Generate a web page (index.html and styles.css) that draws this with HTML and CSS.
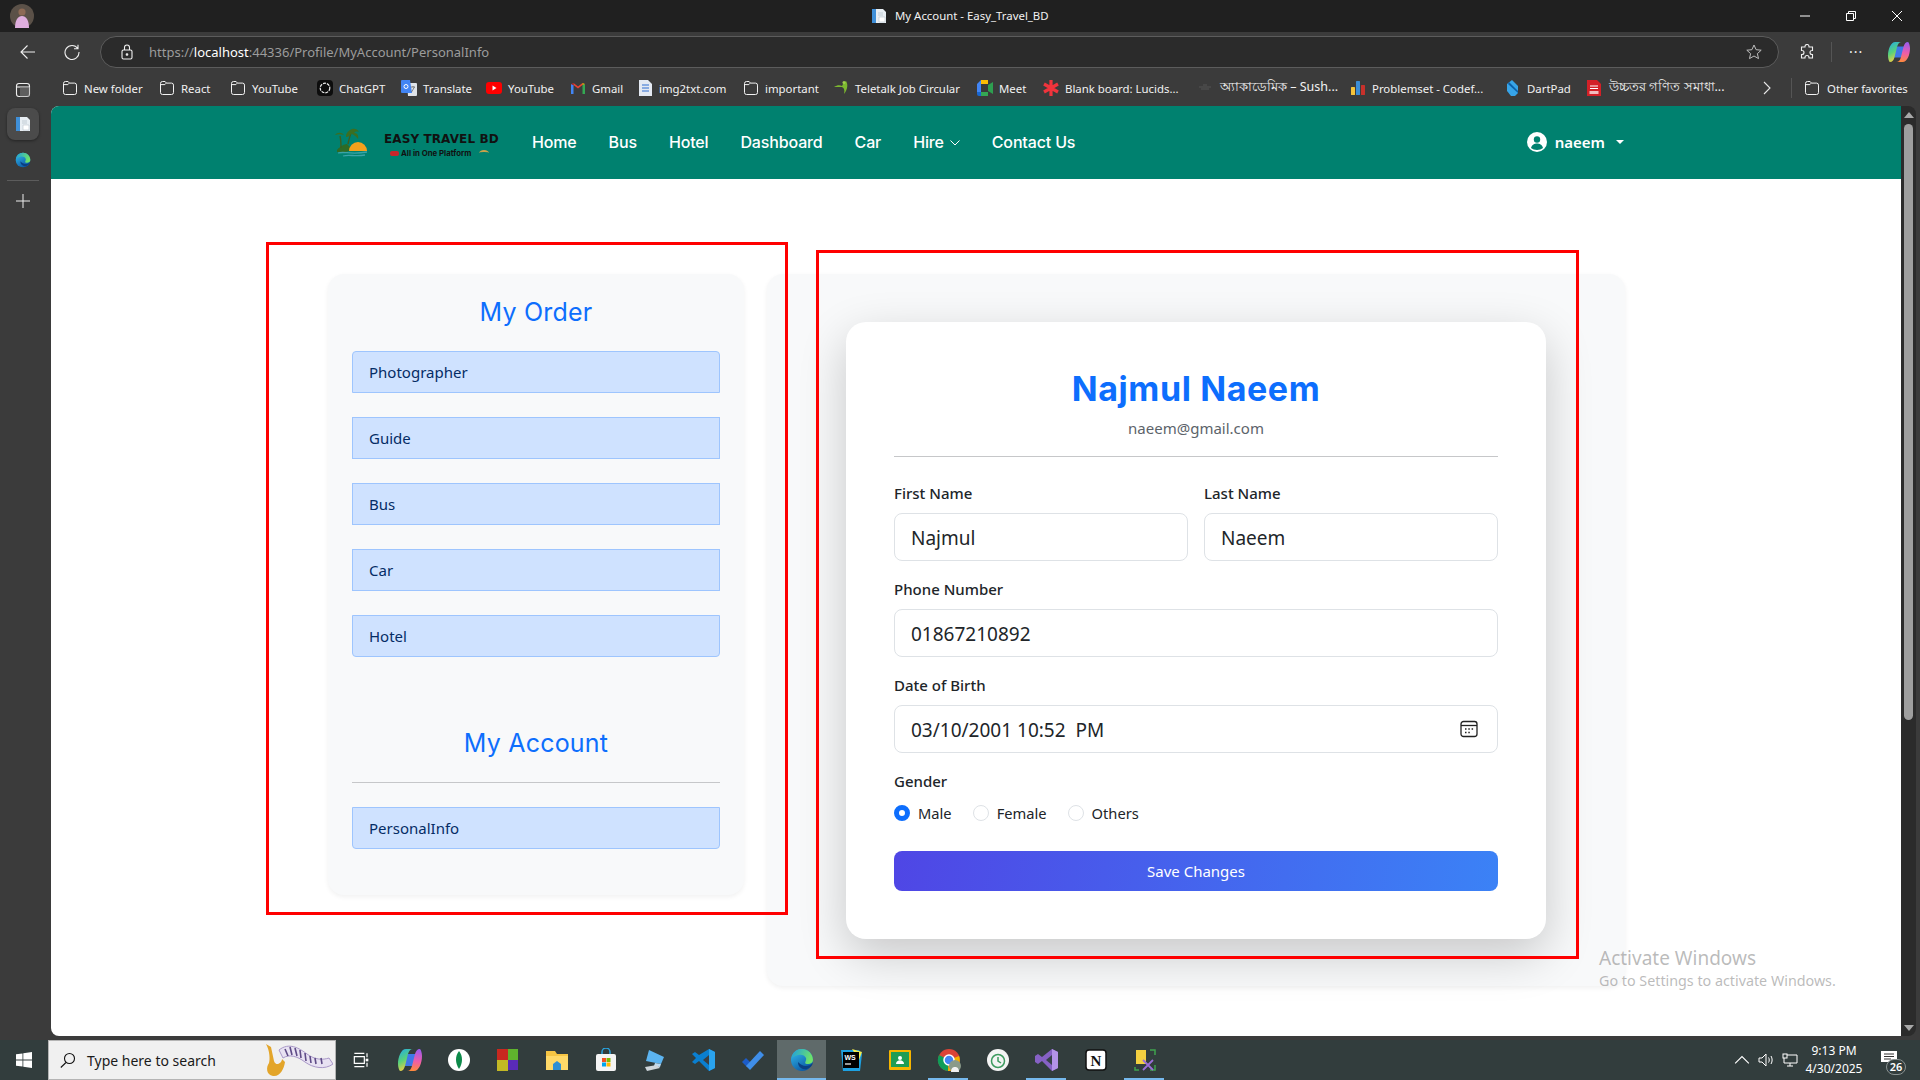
FILE: index.html
```html
<!DOCTYPE html>
<html lang="en">
<head>
<meta charset="utf-8">
<title>My Account - Easy_Travel_BD</title>
<link rel="stylesheet" href="styles.css">
</head>
<body>
<svg class="defs" width="0" height="0" aria-hidden="true">
  <symbol id="folder" viewBox="0 0 16 16"><path d="M1.5 3.5a2 2 0 0 1 2-2h2.6l1.4 1.6h5a2 2 0 0 1 2 2v7.4a2 2 0 0 1-2 2h-9a2 2 0 0 1-2-2z M1.5 4.6h4.4l1.4-1.5" fill="none" stroke="#f2f2f2" stroke-width="1"/></symbol>
  <symbol id="tabdoc" viewBox="0 0 16 16"><path d="M1 1h6v14H1z" fill="#3f8fd8"/><path d="M5 1h7l3 3v11H5z" fill="#e8eef3"/><path d="M8 9h6v5H8z" fill="#fff" stroke="#b9c3cc" stroke-width=".6"/><path d="M7 5h5M7 7h5" stroke="#b9c3cc" stroke-width=".8"/></symbol>
  <linearGradient id="edgeA" x1="0" y1="0" x2=".6" y2="1"><stop offset="0" stop-color="#35c1f1"/><stop offset="1" stop-color="#0c59a4"/></linearGradient>
  <linearGradient id="edgeB" x1="0" y1="0" x2="1" y2=".3"><stop offset="0" stop-color="#1b9de2"/><stop offset="1" stop-color="#6ee26a"/></linearGradient>
  <symbol id="edge" viewBox="0 0 24 24"><circle cx="12" cy="12" r="11" fill="url(#edgeA)"/><path d="M1.500 10C3 4 7 1 12 1c6 0 11 5 11 11 0 3-3 4.500-6 4-4-.5 0-3-1-6-1-3-5-4-8-3-3 1-5 2-6.500 3z" fill="url(#edgeB)"/><path d="M8 14c0 5 4 8 9 7 3-1 5-3 6-6-3 3-8 4-11 2-2-1-3-2-4-3z" fill="#0b3f82"/></symbol>
  <linearGradient id="copA" x1="0" y1="0" x2=".4" y2="1"><stop offset="0" stop-color="#1fa9ec"/><stop offset=".55" stop-color="#58d27a"/><stop offset="1" stop-color="#f5d042"/></linearGradient>
  <linearGradient id="copB" x1=".6" y1="0" x2=".5" y2="1"><stop offset="0" stop-color="#9a5bf0"/><stop offset=".55" stop-color="#ef5da8"/><stop offset="1" stop-color="#ff8a3c"/></linearGradient>
  <symbol id="copilot" viewBox="0 0 24 24"><path d="M9 6h10l-4 12H5z" fill="#3f78e8"/><path d="M8 1h7c-3 0-4 2-5 5L7 18c-1 3-2 5-5 5-1-1-2-4-2-7C0 9 3 1 8 1z" fill="url(#copA)"/><path d="M16 23H9c3 0 4-2 5-5l3-12c1-3 2-5 5-5 1 1 2 4 2 7 0 7-3 15-8 15z" fill="url(#copB)"/></symbol>
</svg>

<div class="window">
  <header class="titlebar">
    <svg class="avatar" viewBox="0 0 24 24"><circle cx="12" cy="12" r="12" fill="#5b5148"/><circle cx="12" cy="8" r="3.600" fill="#8d6a55"/><path d="M5 24c0-8 3-12 7-12s7 4 7 12z" fill="#dfaede"/></svg>
    <div class="tab-title">
      <svg class="ic16"><use href="#tabdoc"/></svg>
      <span>My Account - Easy_Travel_BD</span>
    </div>
    <div class="winctl">
      <svg viewBox="0 0 10 10"><path d="M0 5h10" stroke="#fff"/></svg>
      <svg viewBox="0 0 10 10" fill="none" stroke="#fff"><path d="M.5 2.5h7v7h-7z M2.5 2.5V.5h7v7h-2"/></svg>
      <svg viewBox="0 0 10 10"><path d="M0 0l10 10M10 0L0 10" stroke="#fff"/></svg>
    </div>
  </header>

  <div class="toolbar">
    <svg class="tool-ic" viewBox="0 0 16 16" fill="none" stroke="#f0f0f0" stroke-width="1.1"><path d="M15 8H1M7.5 1.5L1 8l6.500 6.500"/></svg>
    <svg class="tool-ic" viewBox="0 0 16 16" fill="none" stroke="#f0f0f0" stroke-width="1.1"><path d="M13.800 4.500A7 7 0 1 0 15 8M14 .8v4h-4"/></svg>
    <div class="addr">
      <svg class="lock" viewBox="0 0 12 16" fill="none" stroke="#f0f0f0" stroke-width="1.1"><rect x="1" y="6" width="10" height="9" rx="1.500"/><path d="M3.500 6V3.500a2.500 2.500 0 0 1 5 0V6"/><circle cx="6" cy="10.500" r=".8" fill="#f0f0f0"/></svg>
      <span class="url"><span class="url-dim">https://</span><span class="url-host">localhost</span><span class="url-dim">:44336/Profile/MyAccount/PersonalInfo</span></span>
      <svg class="star" viewBox="0 0 16 16" fill="none" stroke="#bdbdbd" stroke-width="1"><path d="M8 1l2.100 4.700 5.100.5-3.800 3.400 1.100 5L8 12l-4.500 2.600 1.100-5L.8 6.200l5.100-.5z"/></svg>
    </div>
    <div class="tool-right">
      <svg class="tool-ic" viewBox="0 0 16 16" fill="none" stroke="#f0f0f0" stroke-width="1.100"><path d="M6 2.500a2 2 0 0 1 4 0V3h3.500v3.500H13a2 2 0 0 0 0 4h.5V14H10v-.5a2 2 0 0 0-4 0v.5H2.500v-3.500H3a2 2 0 0 0 0-4h-.5V3H6z"/></svg>
      <span class="tool-sep"></span>
      <span class="dots">···</span>
      <svg class="copilot-ic"><use href="#copilot"/></svg>
    </div>
  </div>

  <nav class="bookmarks">
    <a class="bm"><svg class="ic16"><use href="#folder"/></svg><span>New folder</span></a>
    <a class="bm"><svg class="ic16"><use href="#folder"/></svg><span>React</span></a>
    <a class="bm"><svg class="ic16"><use href="#folder"/></svg><span>YouTube</span></a>
    <a class="bm"><svg class="ic16" viewBox="0 0 16 16"><rect width="16" height="16" rx="4" fill="#0d0d0d"/><circle cx="8" cy="8" r="4.800" fill="none" stroke="#eee" stroke-width="1.200" stroke-dasharray="3 1"/></svg><span>ChatGPT</span></a>
    <a class="bm"><svg class="ic16" viewBox="0 0 16 16"><path d="M6 3h9a1 1 0 0 1 1 1v11a1 1 0 0 1-1 1H7z" fill="#dfe3e8"/><path d="M1 0h8l2 13H1a1 1 0 0 1-1-1V1a1 1 0 0 1 1-1z" fill="#4285f4"/><path d="M10 7h4M12 6v1M10.500 12l3-5" stroke="#666" stroke-width=".8"/><circle cx="5" cy="6.500" r="2" fill="none" stroke="#fff"/></svg><span>Translate</span></a>
    <a class="bm"><svg class="ic16" viewBox="0 0 16 16"><rect y="2" width="16" height="12" rx="3" fill="#f00"/><path d="M6.500 5.500l4 2.500-4 2.500z" fill="#fff"/></svg><span>YouTube</span></a>
    <a class="bm"><svg class="ic16" viewBox="0 0 16 16"><path d="M1 14V4l2.500 1v9z" fill="#4285f4"/><path d="M15 14V4l-2.500 1v9z" fill="#34a853"/><path d="M3.500 5L8 8.500 12.500 5V3L8 6.500 3.500 3z" fill="#ea4335"/><path d="M1 4l2.500 1V3z" fill="#c5221f"/><path d="M15 4l-2.500 1V3z" fill="#fbbc04"/></svg><span>Gmail</span></a>
    <a class="bm"><svg class="ic16" viewBox="0 0 16 16"><path d="M2 0h9l4 4v12H2z" fill="#e4e9f2"/><path d="M5 5h7M5 8h7M5 11h7" stroke="#2f6fd0" stroke-width="1.200"/></svg><span>img2txt.com</span></a>
    <a class="bm"><svg class="ic16"><use href="#folder"/></svg><span>important</span></a>
    <a class="bm"><svg class="ic16" viewBox="0 0 16 16"><path d="M1 7c3-2 6-2 8-1 1-2 2-4 4-5 2 3 2 8-2 13 1-4 0-6-2-7-3 0-5 0-8 0z" fill="#7cb82f"/><circle cx="11" cy="2.500" r="1.500" fill="#9ed04a"/></svg><span>Teletalk Job Circular</span></a>
    <a class="bm"><svg class="ic16" viewBox="0 0 16 16"><path d="M0 4l4-4h7v4H4v8H0z" fill="#4285f4"/><path d="M4 0h7v4H4z" fill="#fbbc04"/><path d="M0 12h4v4H2a2 2 0 0 1-2-2z" fill="#1967d2"/><path d="M4 12h7v4H4z" fill="#34a853"/><path d="M11 5l5-3v12l-5-3z" fill="#2e9e50"/><path d="M4 4h7v8H4z" fill="#3a3a3a"/></svg><span>Meet</span></a>
    <a class="bm"><svg class="ic16" viewBox="0 0 16 16"><path d="M8 0v16M1 4l14 8M15 4L1 12" stroke="#f0343c" stroke-width="3.200"/></svg><span>Blank board: Lucids...</span></a>
    <a class="bm bm-wide"><svg class="ic16" viewBox="0 0 16 16"><path d="M2 7h12M4 9h8M6 5h4" stroke="#555" stroke-width="1.200"/></svg><span>অ্যাকাডেমিক – Sush...</span></a>
    <a class="bm"><svg class="ic16" viewBox="0 0 16 16"><rect x="1" y="7" width="4" height="8" rx=".5" fill="#f5c33b"/><rect x="6" y="1" width="4" height="14" rx=".5" fill="#3b8dd6"/><rect x="11" y="5" width="4" height="10" rx=".5" fill="#c8312b"/></svg><span>Problemset - Codef...</span></a>
    <a class="bm"><svg class="ic16" viewBox="0 0 16 16"><path d="M7 0l6 6v7l-3 3H6L2 11V4z" fill="#37a4e8"/><path d="M4 2l9 9v2L3 4z" fill="#0a5fa8"/></svg><span>DartPad</span></a>
    <a class="bm bm-wide"><svg class="ic16" viewBox="0 0 16 16"><path d="M1 0h10l4 4v12H1z" fill="#d32027"/><path d="M4 6h8M4 8.500h8" stroke="#fff"/><rect x="3.500" y="11" width="9" height="3" fill="#fff" opacity=".7"/></svg><span>উচ্চতর গণিত সমাধা...</span></a>
    <svg class="bm-more" viewBox="0 0 8 14" fill="none" stroke="#e8e8e8" stroke-width="1.100"><path d="M1 1l6 6-6 6"/></svg>
    <span class="bm-sep"></span>
    <a class="bm-other"><svg class="ic16"><use href="#folder"/></svg><span>Other favorites</span></a>
  </nav>

  <div class="workspace">
    <aside class="edge-side">
      <svg class="side-top" viewBox="0 0 16 16" fill="none" stroke="#eee" stroke-width="1.100"><rect x="1.500" y="1.500" width="13" height="13" rx="2.500"/><path d="M1.500 5h13"/><path d="M5 5h9.500v9.500H5z" fill="#777" stroke="none" opacity=".6"/></svg>
      <span class="side-active"><svg class="ic16"><use href="#tabdoc"/></svg></span>
      <svg class="side-edge"><use href="#edge"/></svg>
      <span class="side-sep"></span>
      <svg class="side-plus" viewBox="0 0 14 14" stroke="#eee" stroke-width="1"><path d="M7 0v14M0 7h14"/></svg>
    </aside>

    <div class="viewport">
      <div class="site-nav">
        <a class="brand">
          <svg class="brand-art" viewBox="0 0 34 34">
            <path d="M3 24c3-4 8-6 10-6l5 5c-4 3-8 4-15 3z" fill="#2f6b24"/>
            <path d="M7 22c0-5 0-8-1-12M14 18c1-5 2-9 4-13" stroke="#3d5f1f" stroke-width="1.400" fill="none"/>
            <path d="M1 9c2-3 7-3 9 0-3-1-6-1-9 0z M12 9c2-6 10-9 13-3-3-1-4 0-5 1 3 0 5 2 4 6-2-3-5-5-7-5-1 2-3 3-5 3 0-1 0-2 0-2z" fill="#3b6e22"/>
            <path d="M15 25a9 9 0 0 1 18 0z" fill="#f5a11c"/>
            <path d="M4 27c7-2 12 2 29-1M9 30c7-2 11 1 22-1" stroke="#3aa3a8" stroke-width="1.300" fill="none"/>
          </svg>
          <span class="brand-text">
            <b class="brand-name">EASY TRAVEL BD</b>
            <span class="brand-sub"><i class="brand-car"></i><span>All in One Platform</span><i class="brand-pick"></i></span>
          </span>
        </a>
        <ul class="site-links">
          <li>Home</li><li>Bus</li><li>Hotel</li><li>Dashboard</li><li>Car</li>
          <li class="has-sub">Hire <svg viewBox="0 0 10 6" fill="none" stroke="#fff"><path d="M.5.500L5 5 9.500.500"/></svg></li>
          <li>Contact Us</li>
        </ul>
        <div class="user">
          <svg class="user-ic" viewBox="0 0 20 20"><circle cx="10" cy="10" r="10" fill="#fff"/><circle cx="10" cy="7.500" r="3.200" fill="#00816f"/><path d="M4 16c1-3.500 3.500-4.500 6-4.500s5 1 6 4.500c-3 2.500-9 2.500-12 0z" fill="#00816f"/></svg>
          <span>naeem</span>
          <i class="caret"></i>
        </div>
      </div>

      <main class="content">
        <section class="side-card">
          <h2 class="side-title">My Order</h2>
          <a class="side-item first">Photographer</a>
          <a class="side-item">Guide</a>
          <a class="side-item">Bus</a>
          <a class="side-item">Car</a>
          <a class="side-item last">Hotel</a>
          <h2 class="side-title account">My Account</h2>
          <hr class="side-rule">
          <a class="side-item last">PersonalInfo</a>
        </section>

        <section class="panel">
          <form class="profile">
            <h1 class="profile-name">Najmul Naeem</h1>
            <p class="profile-mail">naeem@gmail.com</p>
            <hr class="profile-rule">
            <div class="two">
              <label class="field"><span>First Name</span><input class="input" value="Najmul"></label>
              <label class="field"><span>Last Name</span><input class="input" value="Naeem"></label>
            </div>
            <label class="field"><span>Phone Number</span><input class="input" value="01867210892"></label>
            <label class="field"><span>Date of Birth</span>
              <span class="date-wrap">
                <input class="input" value="03/10/2001 10:52  PM">
                <svg class="cal" viewBox="0 0 18 18" fill="none" stroke="#222" stroke-width="1.300"><rect x="1" y="1.500" width="16" height="15" rx="2.500"/><path d="M1 5.500h16"/><path d="M5 9h1.500M8.300 9h1.500M11.600 9h1.500M5 12.500h1.500M8.300 12.500h1.500" stroke-width="1.500"/></svg>
              </span>
            </label>
            <div class="gender">
              <span class="gender-label">Gender</span>
              <div class="radios">
                <span class="radio-item"><i class="radio on"></i>Male</span>
                <span class="radio-item"><i class="radio"></i>Female</span>
                <span class="radio-item"><i class="radio"></i>Others</span>
              </div>
            </div>
            <button class="save" type="button">Save Changes</button>
          </form>
        </section>
      </main>

      <div class="mark mark-left"></div>
      <div class="mark mark-right"></div>
      <div class="activate">
        <div class="act-1">Activate Windows</div>
        <div class="act-2">Go to Settings to activate Windows.</div>
      </div>
    </div>

    <div class="scrollbar">
      <i class="arrow up"></i>
      <span class="thumb"></span>
      <i class="arrow down"></i>
    </div>
  </div>

  <footer class="taskbar">
    <svg class="start" viewBox="0 0 16 16" fill="#fff"><path d="M0 2.300l6.500-.9v6.200H0zM7.300 1.300L16 0v7.600H7.300zM0 8.400h6.500v6.200L0 13.700zM7.300 8.400H16V16l-8.700-1.300z"/></svg>
    <div class="search">
      <svg class="search-ic" viewBox="0 0 16 16" fill="none" stroke="#111" stroke-width="1.100"><circle cx="9.500" cy="6.500" r="5"/><path d="M6 10.500L.8 15.500"/></svg>
      <span class="search-text">Type here to search</span>
      <svg class="search-art" viewBox="0 0 70 36">
        <path d="M3 2l5 3 3 14c2 6 8 2 8-2l3 3c-1 7-5 15-12 14-7-1-7-9-4-13 1-3 1-12-3-19z" fill="#e3a52a"/>
        <path d="M16 8c10-8 20-2 28 4s16 6 22 4l4 6c-8 6-20 4-28-2S26 12 20 16z" fill="#e8e2f2" stroke="#a998c8"/>
        <path d="M22 7l3 7M27 5l2 8M32 6l2 8M37 8l1 8M42 11l1 8M47 14l1 7M52 16l1 6M58 16l1 6" stroke="#5e4b86" stroke-width="1.600"/>
      </svg>
    </div>
    <div class="task-icons">
      <span class="task"><svg class="ti-sm" viewBox="0 0 24 24" fill="none" stroke="#fff" stroke-width="1.800"><path d="M2 2h15M2 22h15M2 7h15v10H2z"/><path d="M21 2v6M21 16v6"/><rect x="19" y="10" width="4" height="4" fill="#fff" stroke="none"/></svg></span>
      <span class="task"><svg class="ti"><use href="#copilot"/></svg></span>
      <span class="task"><svg class="ti" viewBox="0 0 24 24"><circle cx="12" cy="12" r="11" fill="#fff"/><path d="M12 3c4 5 4 12 0 18-4-6-4-13 0-18z" fill="#0d8a4a"/></svg></span>
      <span class="task"><svg class="ti" viewBox="0 0 24 24"><path d="M1 1h11v11H1z" fill="#c8281f"/><path d="M12 1h10v11H12z" fill="#5fb32d"/><path d="M1 12h11v11H1z" fill="#c3b825"/><path d="M12 12h10v10H12z" fill="#5a2bb8"/></svg></span>
      <span class="task"><svg class="ti" viewBox="0 0 24 24"><path d="M1 3h9l2 3h11v16H1z" fill="#f6c544"/><path d="M1 8h22v14H1z" fill="#ffd968"/><path d="M8 22v-6l4-3 4 3v6z" fill="#2d8fd5"/></svg></span>
      <span class="task"><svg class="ti" viewBox="0 0 24 24"><path d="M8 6V4a4 4 0 0 1 8 0v2" fill="none" stroke="#29a3df" stroke-width="1.500"/><rect x="2" y="6" width="20" height="17" rx="2" fill="#f4f4f4"/><path d="M8 10h4v4H8z" fill="#f25022"/><path d="M12.500 10h4v4h-4z" fill="#7fba00"/><path d="M8 14.500h4v4H8z" fill="#00a4ef"/><path d="M12.500 14.500h4v4h-4z" fill="#ffb900"/></svg></span>
      <span class="task"><svg class="ti" viewBox="0 0 24 24"><path d="M6 2l15 7-3 7-15-3z" fill="#5cb4f0"/><path d="M18 16l-1 3-6-1 1-3z" fill="#bcdcf4"/><path d="M2 19l12-2 3 3-13 3z" fill="#cfd6db"/></svg></span>
      <span class="task"><svg class="ti" viewBox="0 0 24 24"><path d="M17 1l6 3v16l-6 3-10-10-4 3-3-2 4-4-4-4 3-2 4 3z" fill="#0a7fd0"/><path d="M17 1l6 3v16l-6 3z" fill="#2aa3ee"/><path d="M17 7l-6 5 6 5z" fill="#3a3f42"/></svg></span>
      <span class="task"><svg class="ti" viewBox="0 0 24 24"><path d="M1 14l4-4 5 5-4 4z" fill="#1c5cc8"/><path d="M6 19L20 4l4 4-14 15z" transform="translate(-1 -1)" fill="#3f8ee8"/></svg></span>
      <span class="task active"><svg class="ti"><use href="#edge"/></svg></span>
      <span class="task"><svg class="ti" viewBox="0 0 24 24"><path d="M2 2h18l3 4-2 17H4z" fill="#1da1e2"/><path d="M13 1l10 3-3 8z" fill="#f5ee4f"/><rect x="4" y="4" width="16" height="16" fill="#000"/><text class="ws" x="5.500" y="12">WS</text><path d="M6 16h6" stroke="#fff" stroke-width="1.200"/></svg></span>
      <span class="task"><svg class="ti" viewBox="0 0 24 24"><rect x="1" y="2" width="22" height="20" rx="1" fill="#f7b500"/><rect x="3" y="4" width="18" height="15" fill="#1f9d55"/><circle cx="12" cy="10" r="2" fill="#fff"/><path d="M8 16c0-5 8-5 8 0z" fill="#fff"/></svg></span>
      <span class="task open"><svg class="ti" viewBox="0 0 24 24"><circle cx="12" cy="12" r="11" fill="#db4437"/><path d="M12 12L2 7a11 11 0 0 0 9 16z" fill="#0f9d58"/><path d="M12 12l10-4a11 11 0 0 1-11 15z" fill="#f4b400"/><circle cx="12" cy="12" r="5" fill="#4285f4" stroke="#fff" stroke-width="1.500"/><circle cx="18" cy="18" r="6" fill="#8a9a8a"/><path d="M14 24c0-4 2-5 4-5s4 1 4 5z" fill="#f2f2f2"/></svg></span>
      <span class="task"><svg class="ti" viewBox="0 0 24 24"><circle cx="12" cy="12" r="11" fill="#f4f4f4"/><circle cx="12" cy="13" r="6.500" fill="none" stroke="#3d9a5f" stroke-width="1.500"/><path d="M12 9v4l3 2" fill="none" stroke="#3d9a5f" stroke-width="1.500"/></svg></span>
      <span class="task open"><svg class="ti" viewBox="0 0 24 24"><path d="M17 1l6 3v16l-6 3-10-10-4 3-3-2V8l3-2 4 3z" fill="#8661c5"/><path d="M17 1l6 3v16l-6 3z" fill="#b393e8"/><path d="M17 7l-6 5 6 5z" fill="#38424a"/></svg></span>
      <span class="task"><svg class="ti" viewBox="0 0 24 24"><rect x="2" y="2" width="20" height="20" rx="3" fill="#fff" stroke="#111" stroke-width="1.500"/><text class="nt" x="12" y="18">N</text></svg></span>
      <span class="task open"><svg class="ti" viewBox="0 0 24 24"><path d="M3 2h10v14H3z" fill="#f4d040"/><path d="M17 2h5v5M22 17v5h-5M6 22H2v-3" fill="none" stroke="#3fa34d" stroke-width="1.500"/><path d="M10 12l10 10M20 12L10 22" stroke="#9a6dd7" stroke-width="1.800"/></svg></span>
    </div>
    <div class="tray">
      <svg class="tray-ic" viewBox="0 0 14 8" fill="none" stroke="#fff" stroke-width="1"><path d="M1 7l6-6 6 6"/></svg>
      <svg class="tray-ic" viewBox="0 0 16 14" fill="none" stroke="#fff" stroke-width="1"><path d="M1 5h3l4-4v12L4 9H1zM10.500 4.500c1 1.500 1 3.500 0 5M13 3c1.500 2.500 1.500 5.500 0 8"/></svg>
      <svg class="tray-ic" viewBox="0 0 16 14" fill="none" stroke="#fff" stroke-width="1"><path d="M5 2h10v8H2V5M8 10v3M5 13h6"/><rect x="1" y="1" width="4" height="4"/></svg>
      <div class="clock"><span>9:13 PM</span><span>4/30/2025</span></div>
      <div class="notify">
        <svg class="notify-ic" viewBox="0 0 16 14"><path d="M0 0h16v11H0z" fill="#fff"/><path d="M3 3h10M3 5.500h10M3 8h7" stroke="#333" stroke-width="1"/></svg>
        <span class="badge">26</span>
      </div>
    </div>
  </footer>
</div>
</body>
</html>
```

FILE: styles.css
```css
* { box-sizing: border-box; }
html, body { margin: 0; height: 100%; overflow: hidden; }
body { font-family: "Noto Sans", "Open Sans", sans-serif; background: #3b3b3b; color: #212529; }
.defs { position: absolute; }
.ic16 { width: 16px; height: 16px; flex: none; display: block; }
.window { width: 1920px; height: 1080px; display: flex; flex-direction: column; }

/* title bar */
.titlebar { height: 32px; background: #202020; display: flex; align-items: center; position: relative; padding-left: 10px; flex: none; }
.avatar { width: 24px; height: 24px; }
.tab-title { position: absolute; left: 871px; top: 8px; display: flex; align-items: center; gap: 8px; color: #f2f2f2; font-size: 11.400px; line-height: 16px; }
.winctl { margin-left: auto; display: flex; gap: 36px; padding-right: 18px; }
.winctl svg { width: 10px; height: 10px; }

/* toolbar */
.toolbar { height: 40px; background: #3b3b3b; display: flex; align-items: center; flex: none; padding-left: 20px; }
.tool-ic { width: 16px; height: 16px; flex: none; }
.toolbar > .tool-ic { margin-right: 28px; }
.toolbar > .tool-ic + .tool-ic { margin-right: 20px; }
.addr { width: 1679px; height: 32px; border: 1px solid #5c5c5c; border-radius: 16px; background: #2b2b2b; display: flex; align-items: center; padding: 0 16px 0 20px; }
.lock { width: 12px; height: 16px; margin-right: 16px; }
.url { font-size: 13px; white-space: nowrap; }
.url-dim { color: #9c9c9c; }
.url-host { color: #fff; }
.star { width: 16px; height: 16px; margin-left: auto; }
.tool-right { display: flex; align-items: center; margin-left: 20px; }
.tool-sep { width: 1px; height: 20px; background: #555; margin: 0 17px 0 16px; }
.dots { color: #f0f0f0; font-size: 14px; font-weight: 400; letter-spacing: 1px; line-height: 16px; width: 20px; margin-right: 19px; }
.copilot-ic { width: 22px; height: 24px; }

/* bookmarks */
.bookmarks { height: 34px; flex: none; background: #3b3b3b; display: grid; grid-template-columns: 97px 71px 87px 84px 85px 84px 67px 106px 90px 144px 66px 154px 153px 155px 81px 177px 16px 24px auto; align-items: center; padding: 0 0 2px 62px; font-size: 11.400px; color: #f2f2f2; white-space: nowrap; }
.bm { display: flex; align-items: center; gap: 6px; overflow: hidden; }
.bm-wide { gap: 7px; font-size: 12.500px; }
.bm-more { width: 8px; height: 14px; }
.bm-sep { width: 1px; height: 20px; background: #555; justify-self: center; }
.bm-other { display: flex; align-items: center; gap: 7px; margin-left: 1px; }

/* workspace */
.workspace { flex: 1; display: flex; min-height: 0; }
.edge-side { width: 51px; flex: none; display: flex; flex-direction: column; align-items: center; padding-right: 5px; margin-top: -31px; position: relative; z-index: 1; }
.side-top { width: 16px; height: 16px; margin-top: 7px; }
.side-active { width: 32px; height: 32px; margin-top: 10px; border-radius: 8px; background: #4b4b4b; box-shadow: 0 1px 3px rgba(0,0,0,.4); display: flex; align-items: center; justify-content: center; }
.side-edge { width: 16px; height: 16px; margin-top: 12px; }
.side-sep { width: 32px; height: 1px; background: #5c5c5c; margin-top: 12px; }
.side-plus { width: 14px; height: 14px; margin-top: 13px; }
.viewport { flex: none; width: 1850px; height: 930px; background: #fff; border-radius: 8px 0 0 8px; position: relative; overflow: hidden; }

/* site nav */
.site-nav { height: 73px; background: #00816f; color: #fff; display: flex; align-items: center; padding-left: 283px; font-family: Inter, sans-serif; }
.brand { display: flex; align-items: center; width: 197px; flex: none; }
.brand-art { width: 34px; height: 34px; flex: none; margin-right: 16px; }
.brand-text { display: flex; flex-direction: column; color: #111; padding-top: 6px; }
.brand-name { font-family: "DejaVu Sans", sans-serif; font-size: 12px; line-height: 13px; font-weight: 700; white-space: nowrap; letter-spacing: .1px; }
.brand-sub { display: flex; align-items: center; gap: 2px; font-size: 7.800px; font-weight: 700; line-height: 10px; white-space: nowrap; margin-left: 6px; margin-top: 2px; }
.brand-car { width: 9px; height: 5px; background: #c8272b; border-radius: 2px; }
.brand-pick { width: 10px; height: 6px; border-top: 2px solid #c9a24a; border-radius: 50% 50% 0 0; margin-left: 6px; }
.site-links { display: flex; align-items: center; gap: 32px; list-style: none; margin: 0 0 2px 1px; padding: 0; font-size: 16px; font-weight: 500; letter-spacing: -.15px; line-height: 24px; }
.has-sub { display: flex; align-items: center; gap: 6px; }
.has-sub svg { width: 10px; height: 6px; margin-top: 2px; }
.user { margin-left: auto; margin-right: 277px; display: flex; align-items: center; font-family: "Noto Sans", sans-serif; font-size: 15px; font-weight: 600; margin-bottom: 1px; }
.user-ic { width: 20px; height: 20px; margin-right: 8px; }
.caret { width: 0; height: 0; border: 4px solid transparent; border-top-color: #fff; border-bottom: 0; margin-left: 11px; }

/* content */
.content { display: flex; align-items: flex-start; gap: 23px; padding: 95px 0 0 277px; }
.side-card { width: 416px; height: 621px; flex: none; background: #f8f9fa; border-radius: 16px; padding: 20px 24px 0; box-shadow: 0 2px 5px rgba(0,0,0,.06); display: flex; flex-direction: column; }
.side-title { margin: 0 0 21px; font-family: Inter, sans-serif; font-size: 25px; letter-spacing: .2px; font-weight: 400; line-height: 36px; color: #0d6efd; text-align: center; }
.side-title.account { margin: 44px 0 0; }
.side-rule { width: 100%; height: 1px; margin: 21px 0 24px; border: 0; background: #c6c7c9; }
.side-item { height: 42px; flex: none; margin-bottom: 24px; padding: 0 16px; display: flex; align-items: center; background: #cfe2ff; border: 1px solid #9ec5fe; color: #052c65; font-size: 15px; }
.side-item.first { border-radius: 4px 4px 0 0; }
.side-item.last { border-radius: 0 0 4px 4px; }
.panel { width: 858px; height: 712px; flex: none; background: #f8f9fa; border-radius: 16px; padding: 48px 79px; box-shadow: 0 2px 5px rgba(0,0,0,.06); }
.profile { background: #fff; height: 617px; border-radius: 20px; padding: 43px 48px 0; box-shadow: 0 16px 48px rgba(0,0,0,.2); display: flex; flex-direction: column; }
.profile-name { margin: 0; font-family: Inter, sans-serif; font-size: 34px; letter-spacing: .6px; line-height: 48px; font-weight: 700; color: #0d6efd; text-align: center; }
.profile-mail { margin: 3px 0 0; font-size: 15px; line-height: 24px; color: #5c636a; text-align: center; }
.profile-rule { width: 100%; height: 1px; margin: 16px 0 24px; border: 0; background: #c6c7c9; }
.two { display: grid; grid-template-columns: 1fr 1fr; gap: 16px; }
.field { display: flex; flex-direction: column; margin-bottom: 16px; }
.field > span:first-child { font-size: 15px; line-height: 24px; font-weight: 500; margin-bottom: 8px; color: #212529; }
.input { width: 100%; height: 48px; padding: 2px 16px 0; border: 1px solid #dee2e6; border-radius: 8px; font: 400 19px "Noto Sans", sans-serif; color: #212529; background: #fff; outline: none; display: block; }
.date-wrap { position: relative; display: block; }
.cal { position: absolute; right: 20px; top: 15px; width: 18px; height: 18px; }
.gender { display: flex; flex-direction: column; margin-bottom: 26px; }
.gender-label { font-size: 15px; line-height: 24px; font-weight: 500; margin-bottom: 8px; }
.radios { display: flex; gap: 21px; height: 24px; align-items: center; font-size: 14.700px; }
.radio-item { display: flex; align-items: center; gap: 8px; }
.radio { width: 16px; height: 16px; border-radius: 50%; border: 1px solid #dee2e6; background: #fff; display: block; }
.radio.on { border: 5px solid #0d6efd; }
.save { height: 40px; border: 0; border-radius: 8px; color: #fff; font: 400 15px "Noto Sans", sans-serif; background: linear-gradient(100deg, #4f46e5, #3b82f6); }

/* overlays */
.mark { position: absolute; border: 3px solid #f00; }
.mark-left { left: 215px; top: 136px; width: 522px; height: 673px; }
.mark-right { left: 765px; top: 144px; width: 763px; height: 709px; }
.activate { position: absolute; left: 1548px; top: 838px; color: rgba(120,120,120,.5); }
.act-1 { font-size: 19px; line-height: 28px; }
.act-2 { font-size: 14.300px; line-height: 20px; margin-top: -1px; white-space: nowrap; }

/* scrollbar */
.scrollbar { width: 15px; height: 930px; flex: none; background: #2b2b2b; border-radius: 0 8px 8px 0; display: flex; flex-direction: column; align-items: center; position: relative; }
.thumb { width: 9px; height: 596px; margin-top: 6px; background: #9e9e9e; border-radius: 5px; }
.arrow { width: 0; height: 0; border: 5px solid transparent; display: block; }
.arrow.up { border-bottom: 6px solid #a8a8a8; border-top: 0; margin-top: 6px; }
.arrow.down { border-top: 6px solid #a8a8a8; border-bottom: 0; margin-top: auto; margin-bottom: 5px; }

/* taskbar */
.taskbar { height: 40px; flex: none; margin-top: 4px; background: #323d3d; display: flex; align-items: center; position: relative; }
.start { width: 16px; height: 16px; margin: 0 16px; flex: none; }
.search { width: 288px; height: 40px; flex: none; background: #f0f0f0; border: 1px solid #b4b4b4; display: flex; align-items: center; padding-left: 11px; position: relative; }
.search-ic { width: 16px; height: 16px; margin-right: 11px; }
.search-text { font-size: 14px; color: #1a1a1a; }
.search-art { width: 70px; height: 36px; margin-left: auto; margin-right: 2px; }
.task-icons { display: flex; }
.task { width: 49px; height: 40px; display: flex; align-items: center; justify-content: center; position: relative; }
.task.active { background: #5f6a6a; }
.task.active::after { content: ""; position: absolute; left: 0; right: 0; bottom: 0; height: 2px; background: #76b9ed; }
.task.open::after { content: ""; position: absolute; left: 4px; right: 5px; bottom: 0; height: 2px; background: #76b9ed; }
.ti { width: 24px; height: 24px; }
.ti-sm { width: 16px; height: 16px; }
.ws { font: 700 7px "Liberation Sans", sans-serif; fill: #fff; }
.nt { font: 700 15px "Liberation Serif", serif; fill: #111; text-anchor: middle; }
.tray { margin-left: auto; display: flex; align-items: center; color: #fff; height: 40px; padding-right: 8px; }
.tray-ic { width: 16px; height: 14px; margin-right: 8px; }
.clock { display: flex; flex-direction: column; align-items: center; font-size: 12px; line-height: 18px; width: 76px; margin-left: -10px; }
.notify { width: 34px; height: 40px; position: relative; margin-left: 6px; }
.notify-ic { position: absolute; left: 3px; top: 11px; width: 16px; height: 14px; }
.badge { position: absolute; left: 8px; top: 19px; width: 20px; height: 16px; border: 1px solid #8a9292; border-radius: 8px; background: #323d3d; font-size: 11px; font-weight: 600; line-height: 14px; text-align: center; }
```
